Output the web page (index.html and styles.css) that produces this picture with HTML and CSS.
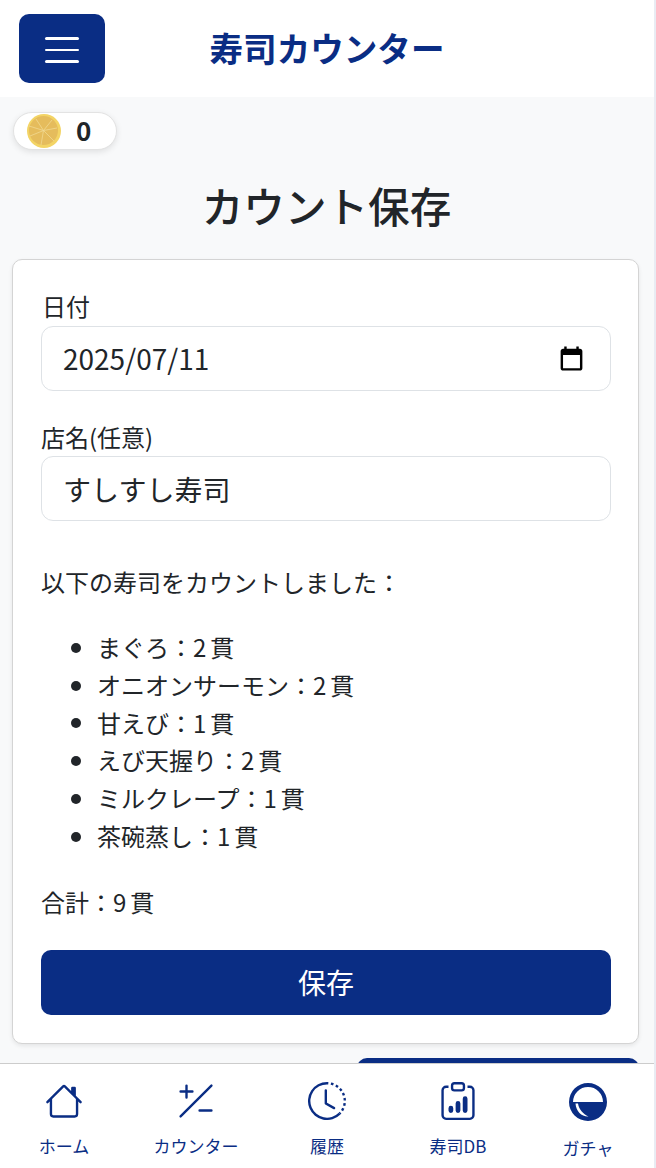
FILE: index.html
```html
<!DOCTYPE html>
<html lang="ja">
<head>
<meta charset="utf-8">
<title>寿司カウンター</title>
<link rel="stylesheet" href="styles.css">
</head>
<body>
<div class="app">
  <header class="topbar">
    <button class="burger" aria-label="menu"><span></span><span></span><span></span></button>
    <div class="brand">寿司カウンター</div>
  </header>
  <main class="main">
    <div class="coins">
      <svg class="coin" viewBox="0 0 34 34">
        <circle cx="17" cy="17" r="17" fill="#f3d465"/>
        <circle cx="16.5" cy="16.5" r="14.5" fill="#e5bc5c"/>
        <path d="M16.5 16.5 9 5M16.5 16.5 25 6M16.5 16.5 30 14M16.5 16.5 27 27M16.5 16.5 14 31M16.5 16.5 3 22M16.5 16.5 2 12" stroke="#f2dc98" stroke-width=".7" fill="none"/>
      </svg>
      <span class="coin-count">0</span>
    </div>
    <h1 class="title">カウント保存</h1>
    <section class="card">
      <label class="label label-date">日付</label>
      <div class="field date-field">
        <span>2025/07/11</span>
        <svg class="cal" viewBox="0 0 24 24"><path d="M19 4h-1V2h-2v2H8V2H6v2H5c-1.1 0-2 .9-2 2v14c0 1.1.9 2 2 2h14c1.1 0 2-.9 2-2V6c0-1.1-.9-2-2-2zm0 16H5V9h14v11z"/></svg>
      </div>
      <label class="label label-shop">店名(任意)</label>
      <div class="field shop-field">すしすし寿司</div>
      <p class="lead">以下の寿司をカウントしました：</p>
      <ul class="items">
        <li>まぐろ：2 貫</li>
        <li>オニオンサーモン：2 貫</li>
        <li>甘えび：1 貫</li>
        <li>えび天握り：2 貫</li>
        <li>ミルクレープ：1 貫</li>
        <li>茶碗蒸し：1 貫</li>
      </ul>
      <p class="total">合計：9 貫</p>
      <button class="save">保存</button>
    </section>
    <div class="below"><button class="next" aria-label="next"></button></div>
  </main>
  <nav class="tabs">
    <a class="tab">
      <svg viewBox="0 0 16 16"><path d="M8.707 1.5a1 1 0 0 0-1.414 0L.646 8.146a.5.5 0 0 0 .708.708L2 8.207V13.5A1.5 1.5 0 0 0 3.5 15h9a1.5 1.5 0 0 0 1.5-1.5V8.207l.646.647a.5.5 0 0 0 .708-.708L13 5.793V2.5a.5.5 0 0 0-.5-.5h-1a.5.5 0 0 0-.5.5v1.293L8.707 1.5ZM13 7.207V13.5a.5.5 0 0 1-.5.5h-9a.5.5 0 0 1-.5-.5V7.207l5-5 5 5Z"/></svg>
      <span>ホーム</span>
    </a>
    <a class="tab">
      <svg viewBox="0 0 16 16"><path d="m1.854 14.854 13-13a.5.5 0 0 0-.708-.708l-13 13a.5.5 0 0 0 .708.708ZM4 1a.5.5 0 0 1 .5.5v2h2a.5.5 0 0 1 0 1h-2v2a.5.5 0 0 1-1 0v-2h-2a.5.5 0 0 1 0-1h2v-2A.5.5 0 0 1 4 1Zm5 11a.5.5 0 0 1 .5-.5h5a.5.5 0 0 1 0 1h-5A.5.5 0 0 1 9 12Z"/></svg>
      <span>カウンター</span>
    </a>
    <a class="tab">
      <svg viewBox="0 0 16 16"><path d="M8.515 1.019A7 7 0 0 0 8 1V0a8 8 0 0 1 .589.022l-.074.997zm2.004.45a7.003 7.003 0 0 0-.985-.299l.219-.976c.383.086.76.2 1.126.342l-.36.933zm1.37.71a7.01 7.01 0 0 0-.439-.27l.493-.87a8.025 8.025 0 0 1 .979.654l-.615.789a6.996 6.996 0 0 0-.418-.302zm1.834 1.79a6.99 6.99 0 0 0-.653-.796l.724-.69c.27.285.52.59.747.91l-.818.576zm.744 1.352a7.08 7.08 0 0 0-.214-.468l.893-.45a7.976 7.976 0 0 1 .45 1.088l-.95.313a7.023 7.023 0 0 0-.179-.483zm.53 2.507a6.991 6.991 0 0 0-.1-1.025l.985-.17c.067.386.106.778.116 1.17l-1 .025zm-.131 1.538c.033-.17.06-.339.081-.51l.993.123a7.957 7.957 0 0 1-.23 1.155l-.964-.267c.046-.165.086-.332.12-.501zm-.952 2.379c.184-.29.346-.594.486-.908l.914.405c-.16.36-.345.706-.555 1.038l-.845-.535zm-.964 1.205c.122-.122.239-.248.35-.378l.758.653a8.073 8.073 0 0 1-.401.432l-.707-.707z"/><path d="M8 1a7 7 0 1 0 4.95 11.95l.707.707A8.001 8.001 0 1 1 8 0v1z"/><path d="M7.5 3a.5.5 0 0 1 .5.5v5.21l3.248 1.856a.5.5 0 0 1-.496.868l-3.5-2A.5.5 0 0 1 7 9V3.5a.5.5 0 0 1 .5-.5z"/></svg>
      <span>履歴</span>
    </a>
    <a class="tab">
      <svg viewBox="0 0 16 16"><path d="M4 11a1 1 0 1 1 2 0v1a1 1 0 1 1-2 0v-1zm6-4a1 1 0 1 1 2 0v5a1 1 0 1 1-2 0V7zM7 9a1 1 0 0 1 2 0v3a1 1 0 1 1-2 0V9z"/><path d="M4 1.5H3a2 2 0 0 0-2 2V14a2 2 0 0 0 2 2h10a2 2 0 0 0 2-2V3.5a2 2 0 0 0-2-2h-1v1h1a1 1 0 0 1 1 1V14a1 1 0 0 1-1 1H3a1 1 0 0 1-1-1V3.5a1 1 0 0 1 1-1h1v-1z"/><path d="M9.5 1a.5.5 0 0 1 .5.5v1a.5.5 0 0 1-.5.5h-3a.5.5 0 0 1-.5-.5v-1a.5.5 0 0 1 .5-.5h3zm-3-1A1.5 1.5 0 0 0 5 1.5v1A1.5 1.5 0 0 0 6.5 4h3A1.5 1.5 0 0 0 11 2.5v-1A1.5 1.5 0 0 0 9.5 0h-3z"/></svg>
      <span>寿司DB</span>
    </a>
    <a class="tab tab-gacha">
      <svg viewBox="0 0 38 38"><path d="M19 0a19 19 0 1 0 0 38 19 19 0 0 0 0-38Zm0 4a15 15 0 0 1 15 15H4A15 15 0 0 1 19 4Z"/><path d="M9 20.500c1 6 5 10.500 10.500 13C13 34 7 28.500 6.500 20.500Z" fill="#fff"/></svg>
      <span>ガチャ</span>
    </a>
  </nav>
</div>
</body>
</html>
```
FILE: styles.css
```css
* { box-sizing: border-box; }
html, body { margin: 0; height: 100%; background: #e9ecf3; }
body { font-family: "Noto Sans CJK JP", "Noto Sans", sans-serif; color: #212529; overflow: hidden; }
.app { width: 654px; height: 1168px; display: flex; flex-direction: column; background: #f8f9fa; }
.topbar { height: 97px; flex: none; background: #fff; display: flex; align-items: center; position: relative; padding-left: 19px; }
.burger { width: 86px; height: 69px; border: 0; border-radius: 10px; background: #0a2d84; display: flex; flex-direction: column; justify-content: center; align-items: center; gap: 9px; padding: 3px 0 0; }
.burger span { display: block; width: 34px; height: 2.500px; border-radius: 2px; background: #fff; }
.brand { position: absolute; left: 0; right: 0; top: 0; bottom: 2px; display: flex; align-items: center; justify-content: center; font-size: 33.600px; font-weight: 700; color: #0a2d84; pointer-events: none; }
.main { flex: 1; min-height: 0; overflow: hidden; padding: 15px 15px 0 12px; }
.coins { width: 104px; height: 38px; border-radius: 19px; background: #fff; border: 1px solid #e3e3e3; box-shadow: 0 2px 6px rgba(0,0,0,.1); display: flex; align-items: center; padding-left: 13px; gap: 15px; margin-left: 1px; }
.coin { width: 34px; height: 34px; flex: none; }
.coin-count { font-size: 26px; font-weight: 700; line-height: 1; margin-top: -2px; }
.title { margin: 23px 0 0; padding-left: 2px; font-size: 41.600px; font-weight: 500; line-height: 64px; text-align: center; }
.card { margin-top: 22px; background: #fff; border: 1px solid #d4d4d4; border-radius: 10px; box-shadow: 0 2px 4px rgba(0,0,0,.08); padding: 28px 27px 28px 28px; height: 785px; }
.label { display: block; font-size: 24px; line-height: 36px; }
.label-date { margin: 0 0 2px 1px; }
.field { height: 65px; border: 1px solid #dee2e6; border-radius: 12px; background: #fff; display: flex; align-items: center; font-size: 28px; }
.date-field { padding: 0 24px 2px 21px; justify-content: space-between; }
.cal { width: 29px; height: 29px; margin-top: 2px; }
.label-shop { margin: 28px 0 1px; }
.shop-field { padding-left: 21px; }
.lead { margin: 43px 0 0; font-size: 24px; line-height: 36px; }
.items { margin: 28px 0 0; padding: 0 0 0 56px; list-style: none; font-size: 24px; line-height: 37.800px; word-spacing: -1.500px; }
.items li { position: relative; }
.items li::before { content: ""; position: absolute; left: -26px; top: calc(50% - 4px); width: 10px; height: 10px; border-radius: 50%; background: #212529; }
.total { margin: 29px 0 0; font-size: 24px; line-height: 36px; word-spacing: -1.500px; }
.save { display: block; width: 100%; height: 65px; margin-top: 30px; border: 0; border-radius: 10px; background: #0a2d84; color: #fff; font: inherit; font-size: 28px; }
.below { display: flex; justify-content: flex-end; margin-top: 14px; }
.next { width: 282px; height: 65px; border: 0; border-radius: 10px; background: #0a2d84; }
.tabs { height: 105px; flex: none; background: #fff; border-top: 1px solid #ccc; display: grid; grid-template-columns: 128px 136px 126px 136px 124px; }
.tab { display: flex; flex-direction: column; align-items: center; padding-top: 18px; color: #0a2d84; font-size: 17px; line-height: 24px; }
.tab svg { width: 38px; height: 38px; fill: currentColor; margin-bottom: 14px; }
.tab-gacha { padding-top: 19px; }
.tab-gacha span { margin-top: 1px; }
```
